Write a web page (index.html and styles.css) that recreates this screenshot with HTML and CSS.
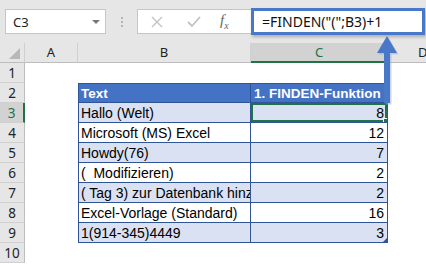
FILE: index.html
```html
<!DOCTYPE html>
<html>
    <link rel="stylesheet" href="styles.css">
    <head>
        <title>FINDEN</title>
    </head>
    <body>
        <div class="toolbar">
            <div class="namebox">
                <span>C3</span>
                <span class="caret"></span>
            </div>
            <div class="grip"><i></i><i></i><i></i></div>
            <div class="fxarea">
                <svg class="btn" width="12" height="12" viewBox="0 0 12 12">
                    <path d="M1 1 L11 11 M11 1 L1 11" stroke="#c3c3c3" stroke-width="1.4"/>
                </svg>
                <svg class="btn ok" width="14" height="12" viewBox="0 0 14 12">
                    <path d="M1 6 L5 10 L13 1" stroke="#c3c3c3" stroke-width="1.8" fill="none"/>
                </svg>
                <span class="fx">f<sub>x</sub></span>
            </div>
            <div class="formula">=FINDEN("(";B3)+1</div>
        </div>

        <div class="sheet">
            <div class="corner"><span></span></div>
            <div class="colhead">A</div>
            <div class="colhead">B</div>
            <div class="colhead active">C</div>
            <div class="colhead last">D</div>

            <div class="rowhead">1</div>
            <div class="cell"></div><div class="cell"></div><div class="cell"></div><div class="cell"></div>

            <div class="rowhead">2</div>
            <div class="cell"></div>
            <div class="tb head first">Text</div>
            <div class="tb head">1. FINDEN-Funktion</div>
            <div class="cell"></div>

            <div class="rowhead active">3</div>
            <div class="cell"></div>
            <div class="tb band first">Hallo (Welt)</div>
            <div class="tb band num sel">8</div>
            <div class="cell"></div>

            <div class="rowhead">4</div>
            <div class="cell"></div>
            <div class="tb first">Microsoft (MS) Excel</div>
            <div class="tb num">12</div>
            <div class="cell"></div>

            <div class="rowhead">5</div>
            <div class="cell"></div>
            <div class="tb band first">Howdy(76)</div>
            <div class="tb band num">7</div>
            <div class="cell"></div>

            <div class="rowhead">6</div>
            <div class="cell"></div>
            <div class="tb first">(&nbsp; Modifizieren)</div>
            <div class="tb num">2</div>
            <div class="cell"></div>

            <div class="rowhead">7</div>
            <div class="cell"></div>
            <div class="tb band first">( Tag 3) zur Datenbank hinzufügen</div>
            <div class="tb band num">2</div>
            <div class="cell"></div>

            <div class="rowhead">8</div>
            <div class="cell"></div>
            <div class="tb first">Excel-Vorlage (Standard)</div>
            <div class="tb num">16</div>
            <div class="cell"></div>

            <div class="rowhead">9</div>
            <div class="cell"></div>
            <div class="tb band first">1(914-345)4449</div>
            <div class="tb band num endcell">3</div>
            <div class="cell"></div>

            <div class="rowhead">10</div>
            <div class="cell"></div><div class="cell"></div><div class="cell"></div><div class="cell"></div>
        </div>

        <!-- Hinweis-Pfeil -->
        <svg class="arrow" width="30" height="76" viewBox="0 0 30 76">
            <polygon points="15,4 25,21 18,21 18,71 12,71 12,21 5,21" fill="#9aa9c4" opacity="0.5" transform="translate(1.5,1.5)"/>
            <polygon points="15,4 25,21 18,21 18,71 12,71 12,21 5,21" fill="#4a78c9"/>
        </svg>
    </body>
</html>
```

FILE: styles.css
```css
body {
    margin: 0;
    width: 426px;
    height: 264px;
    overflow: hidden;
    background: white;
    font-family: "Liberation Sans", Arial, sans-serif;
    position: relative;
}
.toolbar {
    height: 43px;
    background: #e6e6e6;
    display: flex;
    align-items: center;
    padding-left: 5px;
    box-sizing: border-box;
}
.namebox {
    width: 101px;
    height: 25px;
    box-sizing: border-box;
    background: white;
    border: 1px solid #c6c6c6;
    display: flex;
    align-items: center;
    justify-content: space-between;
    padding: 0 5px 0 7px;
    font-family: "Noto Sans", sans-serif;
    font-size: 13px;
    color: #222;
}
.caret {
    width: 0;
    height: 0;
    border-left: 4px solid transparent;
    border-right: 4px solid transparent;
    border-top: 4px solid #777;
}
.grip {
    width: 31px;
    display: flex;
    flex-direction: column;
    align-items: center;
    gap: 2px;
}
.grip i {
    width: 2px;
    height: 2px;
    background: #b4b4b4;
}
.fxarea {
    width: 114px;
    height: 25px;
    box-sizing: border-box;
    background: white;
    border: 1px solid #c6c6c6;
    border-right: none;
    display: flex;
    align-items: center;
    padding-left: 13px;
}
.btn {
    margin-right: 24px;
}
.ok {
    margin-right: 19px;
}
.fx {
    font-family: "Liberation Serif", serif;
    font-style: italic;
    font-size: 15px;
    color: #666;
}
.fx sub {
    font-size: 10px;
}
.formula {
    flex: 1;
    height: 27px;
    margin-right: 1px;
    box-sizing: border-box;
    background: white;
    border: 3px solid #4a78c9;
    box-shadow: 1px 2px 3px rgba(0, 0, 0, 0.25);
    padding-left: 8px;
    line-height: 21px;
    font-family: "Noto Sans", sans-serif;
    font-size: 14px;
    color: #111;
}
.sheet {
    display: grid;
    grid-template-columns: 25px 53px 173px 137px 1fr;
    grid-auto-rows: 20px;
}
.corner,
.colhead {
    background: #e6e6e6;
    border-right: 1px solid #d0d0d0;
    border-bottom: 1px solid #bdbdbd;
    box-sizing: border-box;
    font-family: "Noto Sans", sans-serif;
    font-size: 13px;
    color: #222;
    text-align: center;
    line-height: 19px;
}
.corner {
    position: relative;
}
.corner span {
    position: absolute;
    right: 4px;
    bottom: 3px;
    width: 0;
    height: 0;
    border-left: 11px solid transparent;
    border-bottom: 11px solid #b8b8b8;
}
.colhead.active {
    background: #d2d2d2;
    color: #217346;
    border-bottom: 2px solid #217346;
}
.colhead.last {
    text-align: left;
    padding-left: 30px;
    border-right: none;
}
.rowhead {
    background: #e6e6e6;
    border-right: 1px solid #bdbdbd;
    border-bottom: 1px solid #d0d0d0;
    box-sizing: border-box;
    font-family: "Noto Sans", sans-serif;
    font-size: 13.5px;
    color: #222;
    text-align: center;
    line-height: 20px;
}
.rowhead.active {
    background: #d2d2d2;
    color: #217346;
    border-right: 2px solid #217346;
}
.cell {
    background: white;
}
.tb {
    box-sizing: border-box;
    border-right: 1px solid #2f5597;
    border-bottom: 1px solid #2f5597;
    font-size: 14px;
    line-height: 21px;
    padding: 0 3px;
    white-space: nowrap;
    overflow: hidden;
    color: #000;
    background: white;
}
.tb.first {
    border-left: 1px solid #2f5597;
    padding-left: 2px;
}
.tb.head {
    background: #4472c4;
    color: white;
    font-weight: bold;
    border-top: 1px solid #2f5597;
    font-size: 13.5px;
    line-height: 20px;
}
.tb.band {
    background: #d9e1f2;
}
.tb.num {
    text-align: right;
}
.tb.sel {
    position: relative;
    box-shadow: inset 0 0 0 2px #217346;
}
.tb.sel::after {
    content: "";
    position: absolute;
    right: -3px;
    bottom: -3px;
    width: 5px;
    height: 5px;
    background: #217346;
    border: 1px solid white;
}
.tb.endcell {
    position: relative;
}
.tb.endcell::after {
    content: "";
    position: absolute;
    right: 0;
    bottom: 0;
    border-left: 4px solid transparent;
    border-bottom: 4px solid #2f5597;
}
.arrow {
    position: absolute;
    left: 372px;
    top: 32px;
}
```
